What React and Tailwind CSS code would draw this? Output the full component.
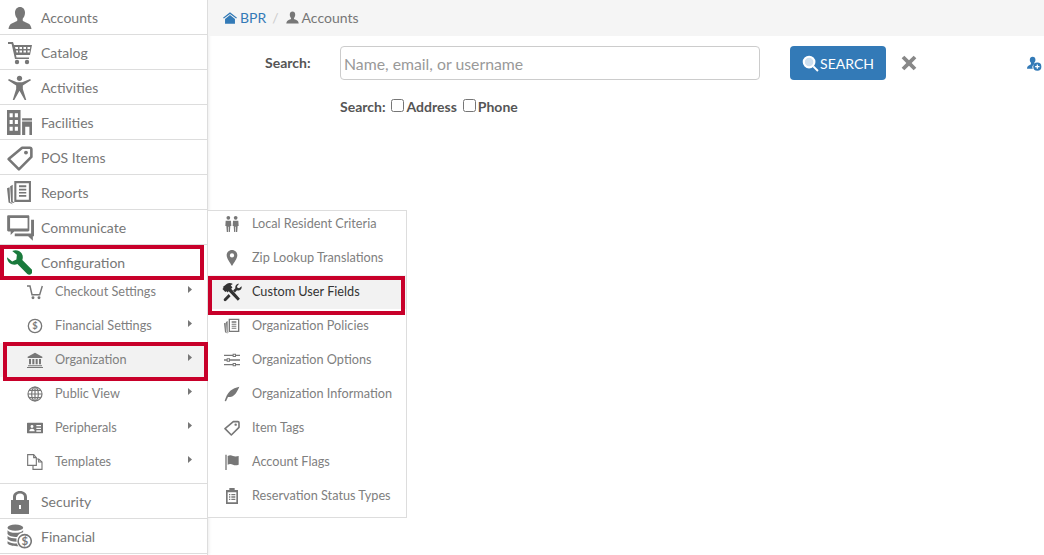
import React from "react";

const I = ({ s = 24, c = "#777", vb = "0 0 24 24", children, className = "" }) => (
  <svg width={s} height={s} viewBox={vb} fill={c} className={className}>{children}</svg>
);

const User = (p) => <I {...p}><path d="M12 1c3 0 5 2.300 5 5.800 0 2.500-1 4.700-2.300 6v1.700c0 1 4 1.800 6.500 3.500 1.300 1 2 3 2.300 5H.5c.3-2 1-4 2.300-5 2.500-1.700 6.500-2.500 6.500-3.500v-1.700C8 11.500 7 9.300 7 6.800 7 3.300 9 1 12 1z" /></I>;
const Cart = (p) => <I {...p}><path fillRule="evenodd" d="M0 1h5l1 3h18l-2 10H8l.5 2.500H21V18H7L3.600 3H0zM7 6l.6 2H10V6zm4.500 0v2H14V6zm4 0v2H18V6zm4 0v2H22l.2-2zM8 9.500l.5 2H10v-2zm3.500 0v2H14v-2zm4 0v2H18v-2zm4 0v2h2l.4-2z" /><circle cx="9" cy="21" r="2.200" /><circle cx="19" cy="21" r="2.200" /></I>;
const Person = (p) => <I {...p}><circle cx="12" cy="3.200" r="2.500" /><path d="M1 5l.8-1.200L9.500 7h5l7.700-3.200L23 5l-7.800 5v3.500L18.500 24H17l-5-9-5 9H5.500l3.300-10.500V10z" /></I>;
const Building = (p) => <I {...p}><path fillRule="evenodd" d="M0 0h13v24H0zm2.500 3v4h3V3zm5 0v4h3V3zM2.500 9.500v4h3v-4zm5 0v4h3v-4zM2.500 16v4h3v-4zm5 0v4h3v-4z" /><path fillRule="evenodd" d="M14.500 8H24v2h-9.500zm0 3H24v13h-2.500v-8h-4v8h-3z" /></I>;
const Tag = (p) => <I {...p}><path fill="none" stroke={p.c || "#777"} strokeWidth="2.400" strokeLinejoin="round" d="M14 2.500h7c.8 0 1.500.7 1.500 1.500v7L11 22.500 1.500 13z" /><circle cx="17.500" cy="7" r="1.800" /></I>;
const Report = (p) => <I {...p}><path fillRule="evenodd" d="M7 1h16v20H7zm2 2v16h12V3zm2.500 2h7v2h-7zm0 3.500h7V10h-7zm0 3h7V13h-7zm0 3h7V16h-7z" /><path d="M5.500 4.500v16l2 1.500-3.500-.5L3 6zM2.500 7l.5 14 3 2.500L1.500 21.500 0 8z" /></I>;
const Chat = (p) => <I {...p}><path fillRule="evenodd" d="M2 1h17c.6 0 1 .4 1 1v12c0 .6-.4 1-1 1H7l-3 3v-3H2c-.6 0-1-.4-1-1V2c0-.6.4-1 1-1zm1.500 2.500v9h15v-9z" /><path d="M21.500 5H24v14h-1v4l-4-4H7.500v-2.300h14z" /></I>;
const Wrench = (p) => <I {...p}><path d="M0 7l5 4 4-2 .5-4.500L5 1c3.500-1.500 7-.5 9 2 1.300 2 1.500 4.500.7 6.500L24 19c.7 1 .5 2.500-.5 3.700-1.200 1.200-2.800 1.300-4 .3L10 13.500c-2.500 1-5.500.7-7.500-1C.8 11 0 9 0 7z" /></I>;
const Lock = (p) => <I {...p}><path fillRule="evenodd" d="M5 10V7c0-3.500 3-6 7-6s7 2.500 7 6v3h2v14H3V10zm3 0h8V7c0-2-1.500-3.500-4-3.500S8 5 8 7zm3 5v4h2v-4z" /></I>;
const Coins = (p) => <I {...p}><ellipse cx="8" cy="3.500" rx="7.500" ry="3" /><path d="M.5 6c1.500 2 4 2.500 7.500 2.500S14 8 15.500 6v2c-3 .7-5 2.500-5.800 4.500C5 12.500 1.500 11 .5 9.500zM.5 11.500c2 1.700 5 2.300 8.700 2.500-.2 1-.2 2 0 3-4 0-7.500-1-8.700-2.500zM.5 16.500c2 1.700 5.500 2.300 9 2.300.3 1 .8 1.700 1.500 2.500-5 .3-9.500-1-10.500-2.500z" /><circle cx="17" cy="16.500" r="6.300" fill="none" stroke={p.c || "#777"} strokeWidth="1.500" /><text x="17" y="20.500" fontSize="11" fontWeight="700" textAnchor="middle" fontFamily="Lato, sans-serif" fill={p.c || "#777"}>$</text></I>;
const CartLine = (p) => <I {...p}><path fill="none" stroke={p.c || "#777"} strokeWidth="2.200" d="M0 3h4.500l3 13h11.500L23 3" /><circle cx="9" cy="20.500" r="2.200" /><circle cx="18" cy="20.500" r="2.200" /></I>;
const Dollar = (p) => <I {...p}><circle cx="12" cy="12" r="10" fill="none" stroke={p.c || "#777"} strokeWidth="2" /><text x="12" y="17" fontSize="14" fontWeight="700" textAnchor="middle" fontFamily="Lato, sans-serif" fill={p.c || "#777"}>$</text></I>;
const Bank = (p) => <I {...p}><path d="M12 1l11 6v2H1V7zM3 10.500h3v8H3zm5 0h3v8H8zm5 0h3v8h-3zm5 0h3v8h-3zM1.500 20h21v1.500h-21zM0 22.500h24V24H0z" /></I>;
const Globe = (p) => <I {...p}><g fill="none" stroke={p.c || "#777"} strokeWidth="1.800"><circle cx="12" cy="12" r="10.500" /><ellipse cx="12" cy="12" rx="5" ry="10.500" /><path d="M1.500 12h21M3 6.500h18M3 17.500h18M12 1.500v21" /></g></I>;
const IdCard = (p) => <I {...p}><path fillRule="evenodd" d="M1 4h22c.6 0 1 .4 1 1v14c0 .6-.4 1-1 1H1c-.6 0-1-.4-1-1V5c0-.6.4-1 1-1zm6.500 3.500a2.200 2.200 0 100 4.400 2.200 2.200 0 000-4.400zM3.500 17h8c0-2.500-1.300-4-4-4s-4 1.500-4 4zM14 7.500v2h7v-2zm0 4v2h7v-2zm0 4v2h7v-2z" /></I>;
const Files = (p) => <I {...p}><g fill="none" stroke={p.c || "#777"} strokeWidth="1.700"><path d="M1 1h9l4 4.500V17H1z" /><path d="M14 7.500h3.500l5 4.500V23H9v-6" /><path d="M10 1v4.500h4M17.500 7.500V12h5" /></g></I>;
const People = (p) => <I {...p}><circle cx="6.500" cy="2.800" r="2.800" /><circle cx="17.500" cy="2.800" r="2.800" /><path d="M2.500 7h8l.5 8H9.500l-.7 9H7v-8H6v8H4.200l-.7-9H2zM13.500 7h8l.5 8h-1.500l-.7 9H18v-8h-1v8h-1.800l-.7-9H13z" /></I>;
const Pin = (p) => <I {...p}><path fillRule="evenodd" d="M12 0c4.500 0 8 3.500 8 8 0 5-5 11-8 16C9 19 4 13 4 8c0-4.500 3.500-8 8-8zm0 5a3.200 3.200 0 100 6.400A3.200 3.200 0 0012 5z" /></I>;
const Tools = (p) => <I {...p}><path d="M1 6l5-4c2-1 5-1 7 .5L10.500 4l2 2.500-1.500 1.500 10.500 12-2.500 2.500L8 11 6.500 12.500 5.500 11 4 12 .5 8.500 2 7z" /><path d="M23.500 5c.5 2-.5 4-2.500 5-1 .4-2 .4-3 0l-2.500 2.500-2.200-2.300L16 7.500c-.4-2 .5-4 2.500-5 .7-.3 1.500-.4 2-.3L18 5l.5 2 2 .5zM8 14.500l2.300 2.500L5 22.500c-.7.7-2 .7-2.500 0s-.7-1.800 0-2.500z" /></I>;
const Sliders = (p) => <I {...p}><path fillRule="evenodd" d="M0 4h13V2.500h5V4h6v2h-6v1.500h-5V6H0zm14.500 0v2h2V4zM0 11h4V9.500h5V11h15v2H9v1.500H4V13H0zm5.500 0v2h2v-2zM0 18h13v-1.500h5V18h6v2h-6v1.500h-5V20H0zm14.500 0v2h2v-2z" /></I>;
const Feather = (p) => <I {...p}><path d="M23 1C20 8 17 14 11 16c-2 .7-4 .5-5 .5L3 23l-2-.5C3 16 5 11 9.500 7 13 4 18 2 23 1z" /></I>;
const Flag = (p) => <I {...p}><path d="M2 1h2v23H2zM5.500 3c3-1.500 5.500-1 8 0s5 1 8.500 0v13c-3.500 1-6 1-8.500 0s-5-1.500-8 0z" /></I>;
const Clipboard = (p) => <I {...p}><path fillRule="evenodd" d="M3 3h5V0h8v3h5v21H3zm2.500 3.500v15h13v-15zM7.500 9h2v2h-2zm3.500 0h6v2h-6zm-3.500 3.500h2v2h-2zm3.500 0h6v2h-6zM7.500 16h2v2h-2zm3.500 0h6v2h-6z" /></I>;
const Home = (p) => <I {...p}><path d="M12 2L0 11.500l1.500 1.500L12 5l10.500 8 1.500-1.500zM3.500 13.500L12 7l8.500 6.500V22H3.500z" /></I>;
const Search = (p) => <I {...p}><circle cx="10" cy="10" r="7.500" fill="#cfe0ef" stroke="#fff" strokeWidth="3" /><path d="M15 17l2-2 6.500 6.500-2 2z" fill="#fff" /></I>;
const Close = (p) => <I {...p}><path d="M5 1l7 7 7-7 4 4-7 7 7 7-4 4-7-7-7 7-4-4 7-7-7-7z" /></I>;
const UserAdd = (p) => <I {...p}><path d="M9 1c3 0 4.500 2 4.500 5 0 2-.7 3.500-1.800 4.800v2.200c-2 .8-3 2.500-3.200 4.500 0 1 .3 2 .8 3H0c0-2.500 1-4.500 3-5.500l3.300-2v-2.200C5 9.500 4.500 8 4.500 6c0-3 1.800-5 4.500-5z" /><circle cx="16.500" cy="17" r="6.500" /><path d="M15.500 13.500h2V16h2.500v2h-2.500v2.500h-2V18H13v-2h2.500z" fill="#fff" /></I>;
const Caret = () => (
  <svg width="4" height="7" viewBox="0 0 4 7" fill="#777" className="mb-[5px]"><path d="M0 0l4 3.500L0 7z" /></svg>
);

const mainTop = [
  ["Accounts", User, 24],
  ["Catalog", Cart, 24],
  ["Activities", Person, 25],
  ["Facilities", Building, 25],
  ["POS Items", Tag, 26],
  ["Reports", Report, 25],
  ["Communicate", Chat, 28],
];
const sub = [
  ["Checkout Settings", CartLine],
  ["Financial Settings", Dollar],
  ["Organization", Bank],
  ["Public View", Globe],
  ["Peripherals", IdCard],
  ["Templates", Files],
];
const fly = [
  ["Local Resident Criteria", People, 16],
  ["Zip Lookup Translations", Pin, 16],
  ["Custom User Fields", Tools, 20],
  ["Organization Policies", Report, 16],
  ["Organization Options", Sliders, 16],
  ["Organization Information", Feather, 16],
  ["Item Tags", Tag, 16],
  ["Account Flags", Flag, 16],
  ["Reservation Status Types", Clipboard, 16],
];

function MainRow({ label, Icon, size, c, className = "pt-[1px]" }) {
  return (
    <div className={`flex h-[35px] shrink-0 items-center border-b border-[#ddd] text-[14px] text-[#777] ${className}`}>
      <span className="flex w-[41px] shrink-0 justify-center pr-[2px]"><Icon s={size} c={c} /></span>
      <span>{label}</span>
    </div>
  );
}

export default function App() {
  return (
    <div className="relative flex h-[555px] w-[1044px] overflow-hidden bg-white font-['Lato','Liberation_Sans',sans-serif]">
      <aside className="flex w-[208px] shrink-0 flex-col border-r border-[#ddd] shadow-[1px_0_3px_rgba(0,0,0,0.08)]">
        {mainTop.map(([l, Ic, s]) => <MainRow key={l} label={l} Icon={Ic} size={s} />)}
        <MainRow label="Configuration" Icon={Wrench} size={25} c="#1a7a3c" className="border-b-0" />
        <ul className="-mt-[5px] flex shrink-0 flex-col border-b border-[#ddd] pb-[4px]">
          {sub.map(([l, Ic]) => (
            <li key={l} className={`flex h-[34px] items-center pl-[27px] pr-[15px] text-[12.700px] text-[#808080] ${l === "Organization" ? "bg-[#f2f2f2]" : ""}`}>
              <span className="w-[28px] shrink-0"><Ic s={16} /></span>
              <span className="flex-1">{l}</span>
              <Caret />
            </li>
          ))}
        </ul>
        <MainRow label="Security" Icon={Lock} size={24} />
        <MainRow label="Financial" Icon={Coins} size={25} />
      </aside>

      <main className="min-w-0 flex-1">
        <nav className="flex h-[36px] items-center bg-[#f5f5f5] pb-[1px] pl-[15px] text-[14px]">
          <Home s={14} c="#337ab7" />
          <span className="ml-[3px] text-[#337ab7]">BPR</span>
          <span className="ml-[6px] text-[#ccc]">/</span>
          <span className="ml-[7px]"><User s={13} /></span>
          <span className="ml-[3px] text-[#777]">Accounts</span>
        </nav>
        <div className="mt-[10px] flex h-[34px] items-center">
          <label className="ml-[57px] -mt-[2px] w-[75px] text-[14px] font-bold text-[#555]">Search:</label>
          <input
            className="h-[34px] w-[420px] rounded-[4px] border border-[#ccc] px-[3px] text-[15.800px] text-[#555] placeholder:text-[#999]"
            placeholder="Name, email, or username"
          />
          <button className="ml-[30px] flex h-[34px] w-[96px] items-center justify-center gap-[1px] rounded-[4px] bg-[#337ab7] text-[14px] text-white">
            <Search s={17} />SEARCH
          </button>
          <span className="ml-[15px]"><Close s={16} c="#888" /></span>
          <span className="ml-[110px]"><UserAdd s={15} c="#337ab7" /></span>
        </div>
        <div className="ml-[132px] mt-[16px] flex items-center text-[14px] font-bold text-[#555]">
          <span>Search:</span>
          <input type="checkbox" className="mb-[2px] ml-[5px] mr-[3px] h-[13px] w-[13px]" />
          <span>Address</span>
          <input type="checkbox" className="mb-[2px] ml-[6px] mr-[2px] h-[13px] w-[13px]" />
          <span>Phone</span>
        </div>
      </main>

      <div className="absolute left-[207px] top-[210px] h-[308px] w-[200px] overflow-hidden border border-[#ddd] bg-white">
        <ul className="-mt-[4px]">
          {fly.map(([l, Ic, s]) => {
            const on = l === "Custom User Fields";
            return (
              <li key={l} className={`flex h-[34px] items-center pl-[16px] text-[12.700px] ${on ? "bg-[#f2f2f2] text-[#333]" : "text-[#808080]"}`}>
                <span className={`flex w-[28px] shrink-0 ${on ? "-ml-[2px] pr-[-2px]" : ""}`}><Ic s={s} c={on ? "#333" : "#777"} /></span>
                <span className={on ? "ml-[2px]" : ""}>{l}</span>
              </li>
            );
          })}
        </ul>
      </div>

      <div className="absolute left-0 top-[245px] h-[35px] w-[204px] border-4 border-[#c8002a]" />
      <div className="absolute left-[3px] top-[342px] h-[39px] w-[205px] border-4 border-[#c8002a]" />
      <div className="absolute left-[208px] top-[276px] h-[39px] w-[197px] border-4 border-[#c8002a]" />
    </div>
  );
}
